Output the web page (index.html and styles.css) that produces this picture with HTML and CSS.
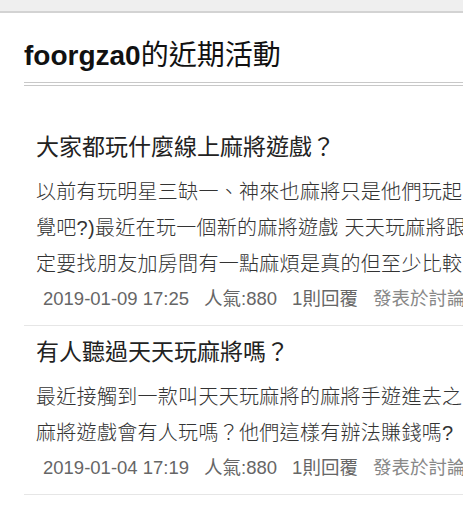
FILE: index.html
```html
<!DOCTYPE html>
<html lang="zh-Hant">
<head>
<meta charset="utf-8">
<title>foorgza0的近期活動</title>
<link rel="stylesheet" href="styles.css">
</head>
<body>
<div class="topbar"></div>
<div class="main">
  <h1 class="page-title"><span class="user">foorgza0</span>的近期活動</h1>
  <ul class="posts">
    <li class="post">
      <h2 class="post-title">大家都玩什麼線上麻將遊戲？</h2>
      <p class="post-body">以前有玩明星三缺一、神來也麻將只是他們玩起<br>覺吧?)最近在玩一個新的麻將遊戲 天天玩麻將跟<br>定要找朋友加房間有一點麻煩是真的但至少比較</p>
      <div class="meta"><span>2019-01-09 17:25</span><span>人氣:880</span><span>1則回覆</span><span class="where">發表於討論</span></div>
    </li>
    <li class="post">
      <h2 class="post-title">有人聽過天天玩麻將嗎？</h2>
      <p class="post-body">最近接觸到一款叫天天玩麻將的麻將手遊進去之<br>麻將遊戲會有人玩嗎？他們這樣有辦法賺錢嗎?</p>
      <div class="meta"><span>2019-01-04 17:19</span><span>人氣:880</span><span>1則回覆</span><span class="where">發表於討論</span></div>
    </li>
  </ul>
</div>
</body>
</html>
```

FILE: styles.css
```css
html, body {
  margin: 0;
  padding: 0;
  background: #fff;
  overflow: hidden;
}

body {
  font-family: "Liberation Sans", "Noto Sans CJK TC", sans-serif;
  color: #222;
}

.topbar {
  height: 11px;
  background: #efefef;
  border-bottom: 2px solid #d3d3d3;
}

.main {
  width: 760px;
  padding-left: 24px;
}

.page-title {
  margin: 23px 0 0;
  padding-bottom: 6px;
  font-size: 28px;
  line-height: 40px;
  font-weight: normal;
  color: #111;
  border-bottom: 4px double #c8c8c8;
}

.page-title .user {
  font-weight: bold;
}

.posts {
  list-style: none;
  margin: 0;
  padding: 35px 0 0;
}

.post {
  padding: 10px 0 9px 12px;
  border-bottom: 1px solid #e6e6e6;
}

.post-title {
  margin: 0 0 11px;
  font-size: 23px;
  line-height: 32px;
  font-weight: normal;
  color: #222;
}

.post-body {
  margin: 0;
  font-size: 20px;
  letter-spacing: 0.3px;
  line-height: 36px;
  font-weight: 300;
  color: #333;
  white-space: nowrap;
}

.meta {
  padding-left: 7px;
  font-size: 18.5px;
  line-height: 34px;
  color: #666;
  white-space: nowrap;
}

.meta span {
  margin-right: 15px;
}

.meta .where {
  color: #888;
}
```
